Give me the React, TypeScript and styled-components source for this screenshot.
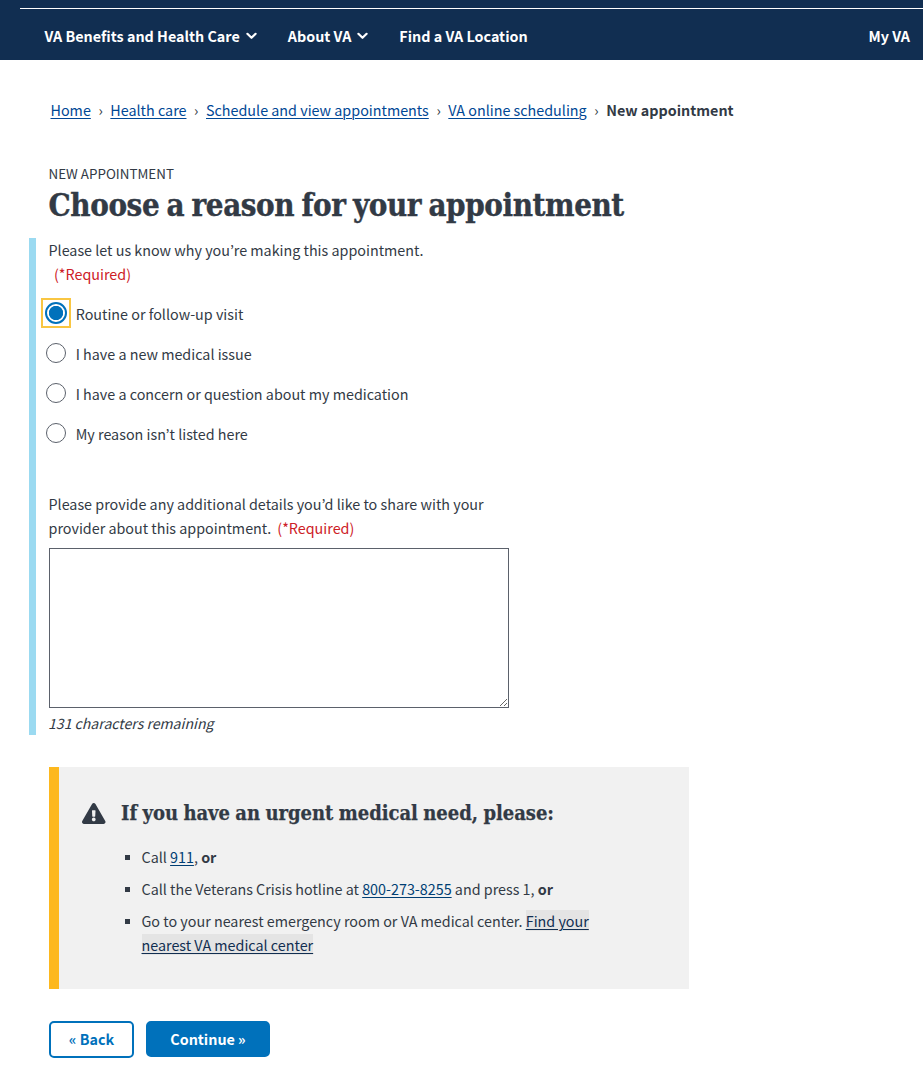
import React, { useState } from "react";
import styled, { createGlobalStyle, css } from "styled-components";

const sans = `"Noto Sans CJK KR", "Noto Sans", sans-serif`;
const serif = `"DejaVu Serif Condensed", "DejaVu Serif", serif`;

const GlobalStyle = createGlobalStyle`
  *, *::before, *::after { box-sizing: border-box; }
  body {
    margin: 0;
    background: #fff;
    color: #323a45;
    font: 14.33px/24px ${sans};
  }
  html { overflow: hidden; }
`;

const Page = styled.div`
  height: 1092px;
  overflow: hidden;
`;

const Header = styled.header`
  height: 60px;
  padding: 8px 0 0 20px;
  background: #112e51;
`;

const Nav = styled.nav`
  display: flex;
  height: 52px;
  padding: 2px 13px 0 24.5px;
  border-top: 1px solid #fff;
  align-items: center;
  gap: 31px;
`;

const NavItem = styled.a<{ $end?: boolean }>`
  display: flex;
  align-items: center;
  gap: 6px;
  color: #fff;
  font-weight: 700;
  white-space: nowrap;
  ${(p) => p.$end && css`margin-left: auto;`}
`;

const Breadcrumbs = styled.nav`
  display: flex;
  padding: 38px 0 0 50.5px;
  gap: 7.6px;
  white-space: nowrap;
`;

const Link = styled.a`
  color: #004795;
  text-decoration: underline;
  text-decoration-thickness: 1px;
  text-underline-offset: 2px;
`;

const Separator = styled.span`
  color: #323a45;
`;

const Main = styled.main`
  padding: 39px 0 0 49px;
`;

const Eyebrow = styled.div`
  font-size: 13.4px;
  text-indent: -0.5px;
`;

const Title = styled.h1`
  margin: 0;
  font: 700 31px/40px ${serif};
  letter-spacing: -0.4px;
  word-spacing: -2px;
  text-indent: -0.5px;
  -webkit-text-stroke: 0.4px #323a45;
  white-space: nowrap;
`;

const Fields = styled.section`
  width: 480px;
  height: 497px;
  margin: 13px 0 0 -20px;
  padding-left: 13px;
  border-left: 7px solid #9bdaf1;
`;

const Question = styled.p`
  margin: 0 0 0 -0.5px;
`;

const Required = styled.span<{ $block?: boolean }>`
  color: #cd2026;
  margin-left: ${(p) => (p.$block ? 5.5 : 6)}px;
  display: ${(p) => (p.$block ? "block" : "inline")};
`;

const Options = styled.div`
  display: flex;
  flex-direction: column;
  gap: 16px;
  padding-top: 16px;
  margin-left: -8px;
`;

const Option = styled.label`
  display: flex;
  height: 24px;
  align-items: center;
  gap: 4.7px;
`;

const FocusFrame = styled.span<{ $focused: boolean }>`
  display: flex;
  flex: none;
  align-items: center;
  justify-content: center;
  width: 30px;
  height: 30px;
  margin-top: -3px;
  border: 2px solid ${(p) => (p.$focused ? "#f9c642" : "transparent")};
`;

const Radio = styled.input`
  appearance: none;
  width: 20px;
  height: 20px;
  margin: 0;
  border: 1px solid #5b616b;
  border-radius: 50%;
  background: #fff;
  outline: none;
  &:checked {
    width: 22px;
    height: 22px;
    border: 2px solid #0071bb;
    background: radial-gradient(circle, #0071bb 6.8px, #fff 7.5px);
  }
`;

const Details = styled.div`
  padding-top: 46px;
`;

const TextArea = styled.textarea`
  display: block;
  width: 460px;
  height: 160px;
  margin: 8px 0 3px;
  border: 1px solid #5b616b;
  border-radius: 0;
  background: #fff;
  outline: none;
`;

const Remaining = styled.div`
  margin-left: -1px;
  font-size: 14.1px;
  font-style: italic;
`;

const Alert = styled.aside`
  display: flex;
  width: 640px;
  height: 222px;
  margin-top: 32px;
  padding: 32px 20px 0 23px;
  border-left: 10px solid #fdb81e;
  background: #f1f1f1;
  gap: 15.5px;
`;

const WarningIcon = styled.svg`
  flex: none;
  width: 23.5px;
  height: 21px;
  margin-top: 4px;
`;

const AlertTitle = styled.h2`
  margin: 0;
  font: 700 20px/28px ${serif};
  letter-spacing: -0.03px;
  word-spacing: -0.8px;
  -webkit-text-stroke: 0.25px #323a45;
  white-space: nowrap;
`;

const List = styled.ul`
  display: flex;
  flex-direction: column;
  gap: 8px;
  margin: 18px 0 0;
  padding: 0;
  list-style: none;
`;

const Item = styled.li`
  display: flex;
  gap: 11.5px;
  white-space: nowrap;
  &::before {
    content: "";
    flex: none;
    width: 5px;
    height: 5px;
    margin: 10px 0 0 4px;
    background: #323a45;
  }
`;

const AlertLink = styled(Link)<{ $shaded?: boolean }>`
  color: ${(p) => (p.$shaded ? "#112e51" : "#003e73")};
  background: ${(p) => (p.$shaded ? "#e4e4e4" : "transparent")};
`;

const Actions = styled.div`
  display: flex;
  align-items: flex-start;
  gap: 12px;
  margin-top: 32px;
`;

const Button = styled.button<{ $primary?: boolean }>`
  width: ${(p) => (p.$primary ? 124 : 85)}px;
  height: ${(p) => (p.$primary ? 36 : 37)}px;
  padding: 0 0 ${(p) => (p.$primary ? 0 : 1)}px;
  border: 2px solid #0071bb;
  border-radius: 5px;
  background: ${(p) => (p.$primary ? "#0071bb" : "#fff")};
  color: ${(p) => (p.$primary ? "#fff" : "#0071bb")};
  font: 700 14.33px/24px ${sans};
`;

const Chevron = () => (
  <svg width="11" height="8" viewBox="0 0 11 8" fill="none">
    <path d="M1.4 1.8 5.5 5.8 9.6 1.8" stroke="#fff" strokeWidth="2.2" strokeLinecap="round" strokeLinejoin="round" />
  </svg>
);

const trail = ["Home", "Health care", "Schedule and view appointments", "VA online scheduling"];
const reasons = [
  "Routine or follow-up visit",
  "I have a new medical issue",
  "I have a concern or question about my medication",
  "My reason isn’t listed here",
];

export default function App() {
  const [reason, setReason] = useState(0);
  return (
    <Page>
      <GlobalStyle />
      <Header>
        <Nav>
          <NavItem>VA Benefits and Health Care <Chevron /></NavItem>
          <NavItem>About VA <Chevron /></NavItem>
          <NavItem>Find a VA Location</NavItem>
          <NavItem $end>My VA</NavItem>
        </Nav>
      </Header>
      <Breadcrumbs>
        {trail.map((name) => (
          <React.Fragment key={name}>
            <Link>{name}</Link>
            <Separator>›</Separator>
          </React.Fragment>
        ))}
        <strong>New appointment</strong>
      </Breadcrumbs>
      <Main>
        <Eyebrow>NEW APPOINTMENT</Eyebrow>
        <Title>Choose a reason for your appointment</Title>
        <Fields>
          <Question>
            Please let us know why you’re making this appointment.
            <Required $block>(*Required)</Required>
          </Question>
          <Options>
            {reasons.map((text, i) => (
              <Option key={text}>
                <FocusFrame $focused={reason === i}>
                  <Radio type="radio" name="reason" checked={reason === i} onChange={() => setReason(i)} />
                </FocusFrame>
                {text}
              </Option>
            ))}
          </Options>
          <Details>
            <Question>
              Please provide any additional details you’d like to share with your
              <br />
              provider about this appointment.
              <Required>(*Required)</Required>
            </Question>
            <TextArea />
            <Remaining>131 characters remaining</Remaining>
          </Details>
        </Fields>
        <Alert>
          <WarningIcon viewBox="0 0 576 512">
            <path
              fill="#323a45"
              d="M569.517 440.013C587.975 472.007 564.806 512 527.94 512H48.054c-36.937 0-59.999-40.055-41.577-71.987L246.423 23.985c18.467-32.009 64.72-31.951 83.154 0l239.94 416.028zM288 354c-25.405 0-46 20.595-46 46s20.595 46 46 46 46-20.595 46-46-20.595-46-46-46zm-43.673-165.346l7.418 136c.347 6.364 5.609 11.346 11.982 11.346h48.546c6.373 0 11.635-4.982 11.982-11.346l7.418-136c.375-6.874-5.098-12.654-11.982-12.654h-63.383c-6.884 0-12.356 5.78-11.981 12.654z"
            />
          </WarningIcon>
          <div>
            <AlertTitle>If you have an urgent medical need, please:</AlertTitle>
            <List>
              <Item>
                <span>Call <AlertLink>911</AlertLink>, <strong>or</strong></span>
              </Item>
              <Item>
                <span>
                  Call the Veterans Crisis hotline at <AlertLink>800-273-8255</AlertLink> and press 1, <strong>or</strong>
                </span>
              </Item>
              <Item>
                <span>
                  Go to your nearest emergency room or VA medical center.{" "}
                  <AlertLink $shaded>Find your<br />nearest VA medical center</AlertLink>
                </span>
              </Item>
            </List>
          </div>
        </Alert>
        <Actions>
          <Button>« Back</Button>
          <Button $primary>Continue »</Button>
        </Actions>
      </Main>
    </Page>
  );
}
